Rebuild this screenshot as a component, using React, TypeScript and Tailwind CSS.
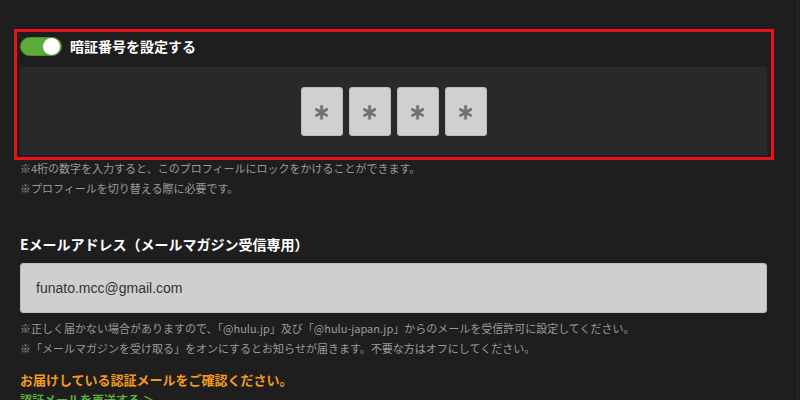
import React from "react";

const jp = { fontFamily: '"Noto Sans CJK JP", "Noto Sans", sans-serif' };

export default function App() {
  return (
    <div className="relative w-[800px] h-[400px] overflow-hidden bg-[#1e1e1e]" style={jp}>
      <div className="absolute right-0 top-0 h-full w-[6px] border-l border-[#161616] bg-[#202020]" />
      <div className="pl-[20px] pt-[36px] w-[767px]">
        <section className="relative">
          <div className="absolute left-[-6px] top-[-7px] w-[760px] h-[131px] border-[3px] border-[#ec1018] pointer-events-none z-10" />
          <div className="flex items-center h-[20px] gap-[8px]">
            <div className="relative w-[42px] h-[19px] rounded-full bg-[#5dab3b] border border-[#4b8d2e]">
              <div className="absolute right-[1px] top-[0px] w-[17px] h-[17px] rounded-full bg-white" />
            </div>
            <span className="text-[14px] font-bold text-white leading-[20px]">暗証番号を設定する</span>
          </div>
          <div className="mt-[11px] h-[88px] bg-[#292929] flex items-center justify-center gap-[6px]">
            {[0, 1, 2, 3].map((i) => (
              <div
                key={i}
                className="w-[42px] h-[49px] rounded-[3px] bg-[#d0d0d0] border border-[#bdbdbd] flex items-center justify-center text-[17px] font-bold text-[#707070] [-webkit-text-stroke:1.2px_#707070]"
              >
                <span className="translate-y-[1px]">＊</span>
              </div>
            ))}
          </div>
        </section>
        <div className="mt-[3px] text-[11px] leading-[20px] text-[#9a9a9a]">
          <p>※4桁の数字を入力すると、このプロフィールにロックをかけることができます。</p>
          <p>※プロフィールを切り替える際に必要です。</p>
        </div>
        <h2 className="mt-[36px] text-[14px] font-bold leading-[20px] text-white">
          Eメールアドレス（メールマガジン受信専用）
        </h2>
        <div
          className="mt-[9px] h-[50px] rounded-[3px] bg-[#cfcfcf] border border-[#bcbcbc] flex items-center pl-[15px] text-[14px] text-[#333333]"
          style={{ fontFamily: '"Liberation Sans", Arial, sans-serif' }}
        >
          funato.mcc@gmail.com
        </div>
        <div className="mt-[5px] text-[11px] leading-[20px] text-[#9a9a9a]">
          <p>※正しく届かない場合がありますので、「@hulu.jp」及び「@hulu-japan.jp」からのメールを受信許可に設定してください。</p>
          <p>※「メールマガジンを受け取る」をオンにするとお知らせが届きます。不要な方はオフにしてください。</p>
        </div>
        <p className="mt-[12px] text-[13px] font-bold leading-[20px] text-[#f29a1f]">
          お届けしている認証メールをご確認ください。
        </p>
        <p className="text-[12px] font-bold leading-[20px] text-[#5fae3c]">認証メールを再送する ＞</p>
      </div>
    </div>
  );
}
